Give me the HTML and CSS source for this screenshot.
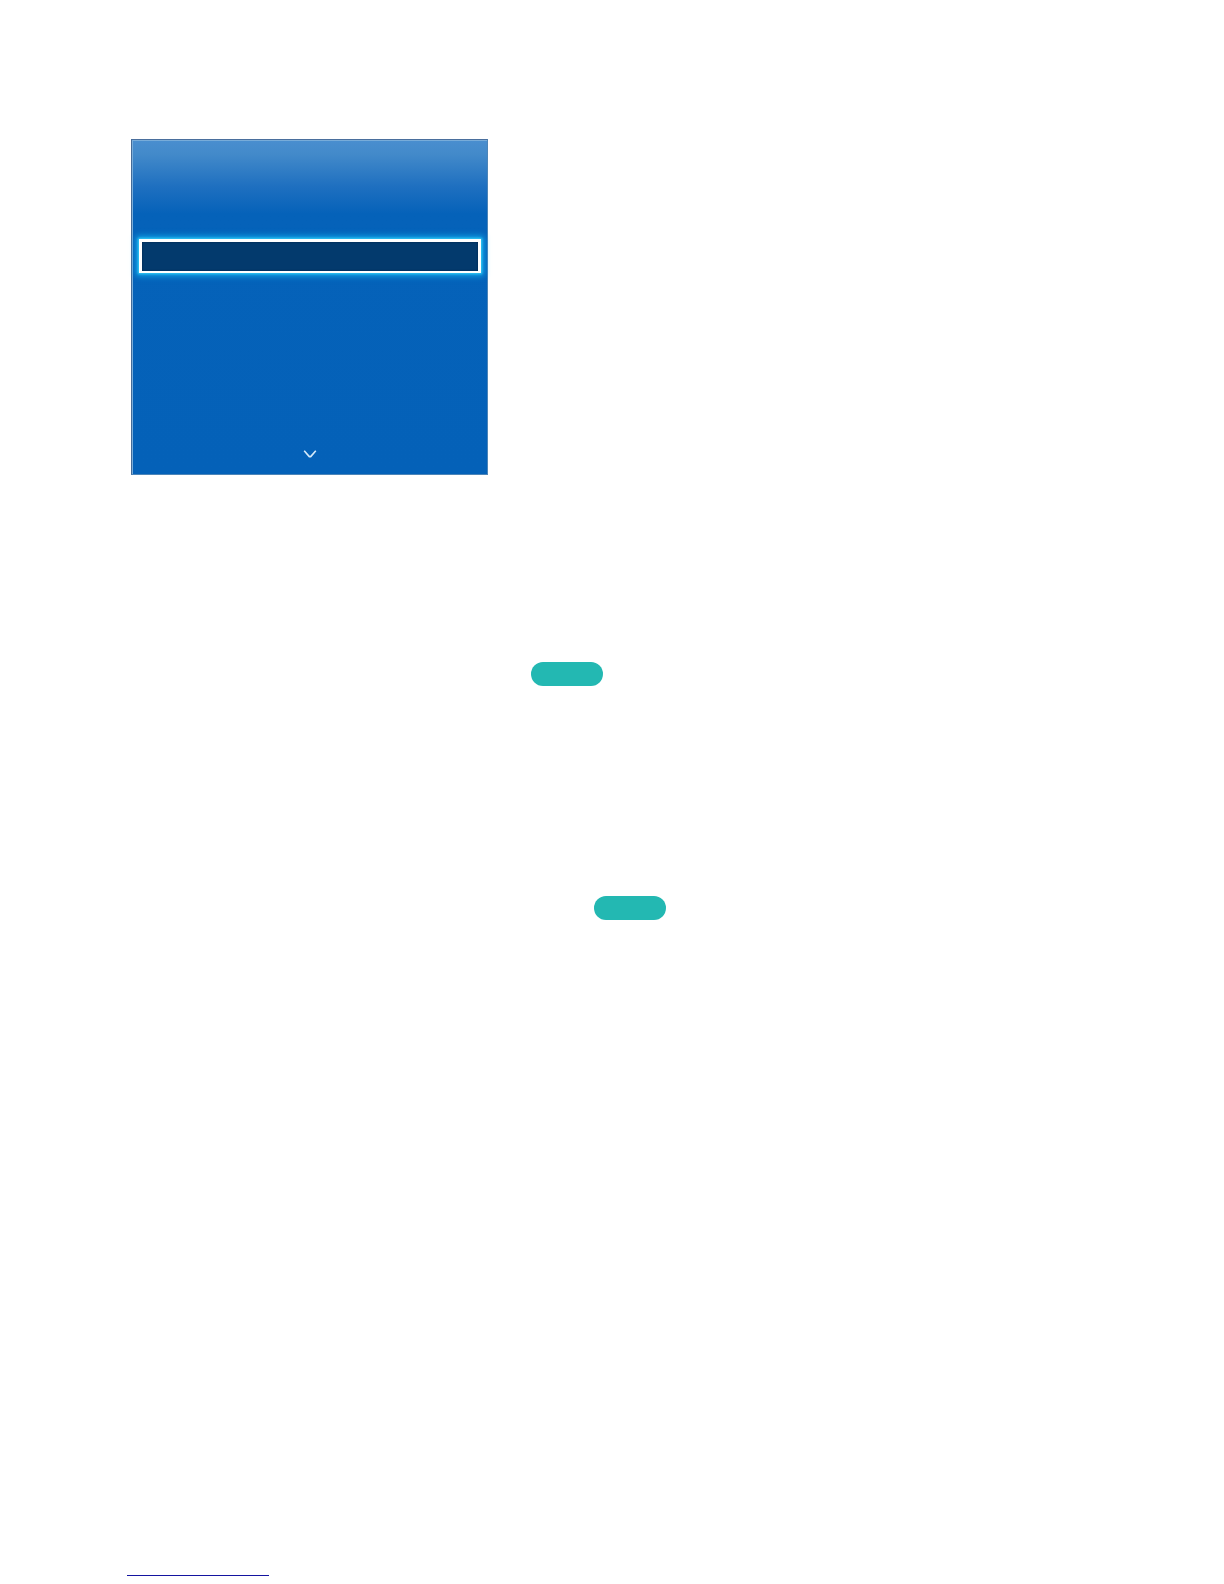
FILE: index.html
```html
<!DOCTYPE html>
<html lang="en">
<head>
<meta charset="utf-8">
<meta name="viewport" content="width=device-width, initial-scale=1">
<title>Menu</title>
<link rel="stylesheet" href="styles.css">
</head>
<body>
<main class="page">
  <section class="menu">
    <button class="menu-item" type="button" aria-label="Selected item"></button>
    <svg class="menu-more" viewBox="0 0 14 10" aria-hidden="true">
      <path d="M1.2 1.8 L6.3 7.6 H7.7 L12.8 1.8" fill="none" stroke="#d5eafa" stroke-width="1.6" stroke-linejoin="round"/>
    </svg>
  </section>
  <div class="row row-first"><span class="pill"></span></div>
  <div class="row row-second"><span class="pill"></span></div>
  <footer class="footer"><a class="footer-link" href="#" aria-label="Contents"></a></footer>
</main>
</body>
</html>
```

FILE: styles.css
```css
* {
  box-sizing: border-box;
}

body {
  margin: 0;
  background: #fff;
  font-family: "Liberation Sans", Arial, sans-serif;
}

.page {
  display: flex;
  flex-direction: column;
  padding: 139px 127px 8px;
}

.menu {
  display: flex;
  flex-direction: column;
  justify-content: space-between;
  width: 100%;
  max-width: 357px;
  min-height: 336px;
  margin-left: 4px;
  padding: 99px 6px 15px 7px;
  border: 1px solid #4d85b8;
  border-top-color: #4a6f9d;
  border-left-color: #456b98;
  background: linear-gradient(#4a8ecf 0, #438aca 14px, #1f70c0 46px, #0562b9 74px, #0461b8 100%);
  box-shadow: inset 1px 1px #78acd9;
}

.menu-item {
  width: 100%;
  height: 34px;
  padding: 0;
  border: 3px solid #fff;
  border-bottom-width: 2px;
  background: #033a6d;
  box-shadow: 0 0 2px 1px #35c8f4, 0 0 6px 3px #12a5e8, inset 0 0 2px #021f42;
}

.menu-more {
  align-self: center;
  width: 14px;
  height: 10px;
}

.row {
  display: flex;
}

.row-first {
  margin-top: 187px;
  padding-left: 404px;
}

.row-second {
  margin-top: 210px;
  padding-left: 467px;
}

.pill {
  width: 72px;
  height: 24px;
  border-radius: 12px;
  background: #23b8b2;
}

.footer {
  display: flex;
  margin-top: 636px;
}

.footer-link {
  width: 142px;
  height: 20px;
  border-bottom: 1px solid #1414a0;
}
```
